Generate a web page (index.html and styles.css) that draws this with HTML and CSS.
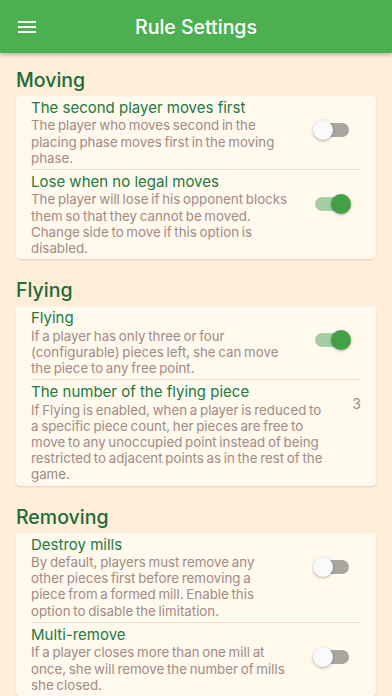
FILE: index.html
```html
<!DOCTYPE html>
<html lang="en">
<head>
  <meta charset="UTF-8">
  <meta name="viewport" content="width=device-width, initial-scale=1.0">
  <title>Rule Settings</title>
  <link rel="stylesheet" href="styles.css">
</head>
<body>
  <header class="app-bar">
    <button class="menu-btn" aria-label="Menu">
      <svg width="18" height="14" viewBox="0 0 18 14">
        <rect x="0" y="1" width="18" height="2" fill="#fff"/>
        <rect x="0" y="6" width="18" height="2" fill="#fff"/>
        <rect x="0" y="11" width="18" height="2" fill="#fff"/>
      </svg>
    </button>
    <h1>Rule Settings</h1>
  </header>

  <main class="settings">
    <section class="group">
      <h2>Moving</h2>
      <div class="card">
        <div class="tile">
          <div class="tile-text">
            <div class="tile-title">The second player moves first</div>
            <div class="tile-sub">The player who moves second in the placing phase moves first in the moving phase.</div>
          </div>
          <div class="trailing"><span class="switch"></span></div>
        </div>
        <div class="tile">
          <div class="tile-text">
            <div class="tile-title">Lose when no legal moves</div>
            <div class="tile-sub">The player will lose if his opponent blocks them so that they cannot be moved. Change side to move if this option is disabled.</div>
          </div>
          <div class="trailing"><span class="switch on"></span></div>
        </div>
      </div>
    </section>

    <section class="group">
      <h2>Flying</h2>
      <div class="card">
        <div class="tile">
          <div class="tile-text">
            <div class="tile-title">Flying</div>
            <div class="tile-sub">If a player has only three or four (configurable) pieces left, she can move the piece to any free point.</div>
          </div>
          <div class="trailing"><span class="switch on"></span></div>
        </div>
        <div class="tile">
          <div class="tile-text">
            <div class="tile-title">The number of the flying piece</div>
            <div class="tile-sub">If Flying is enabled, when a player is reduced to a specific piece count, her pieces are free to move to any unoccupied point instead of being restricted to adjacent points as in the rest of the game.</div>
          </div>
          <div class="value">3</div>
        </div>
      </div>
    </section>

    <section class="group">
      <h2>Removing</h2>
      <div class="card">
        <div class="tile">
          <div class="tile-text">
            <div class="tile-title">Destroy mills</div>
            <div class="tile-sub">By default, players must remove any other pieces first before removing a piece from a formed mill. Enable this option to disable the limitation.</div>
          </div>
          <div class="trailing"><span class="switch"></span></div>
        </div>
        <div class="tile">
          <div class="tile-text">
            <div class="tile-title">Multi-remove</div>
            <div class="tile-sub">If a player closes more than one mill at once, she will remove the number of mills she closed.</div>
          </div>
          <div class="trailing"><span class="switch"></span></div>
        </div>
      </div>
    </section>
  </main>
</body>
</html>
```

FILE: styles.css
```css
body {
  margin: 0;
  font-family: Inter, "Noto Sans", sans-serif;
  background: #ffeed8;
  height: 696px;
  overflow: hidden;
}
.app-bar {
  position: relative;
  z-index: 1;
  height: 53px;
  background: #4caf50;
  display: flex;
  align-items: center;
  justify-content: center;
  box-shadow: 0 2px 4px rgba(0, 0, 0, 0.25);
}
.app-bar h1 {
  margin: 0;
  font-size: 19.5px;
  font-weight: 500;
  color: #fff;
}
.menu-btn {
  position: absolute;
  left: 18px;
  top: 20px;
  padding: 0;
  border: none;
  background: none;
  line-height: 0;
}
.settings {
  padding: 15px 16px 0;
}
.group {
  margin-bottom: 19px;
}
.group h2 {
  margin: 0 0 4px;
  font-size: 19.5px;
  line-height: 24px;
  font-weight: 500;
  color: #1d6b3a;
}
.card {
  background: #fff9ee;
  border-radius: 4px;
  box-shadow: 0 1px 2px rgba(120, 90, 60, 0.18);
  padding: 0 15px;
}
.tile {
  display: flex;
  align-items: flex-start;
  gap: 16px;
  padding: 3px 0;
}
.tile + .tile {
  border-top: 1px solid #ecdcd2;
}
.tile-text {
  flex: 1;
}
.tile-title {
  font-size: 15px;
  line-height: 18.4px;
  color: #227a3e;
}
.tile-sub {
  font-size: 13.3px;
  line-height: 16.2px;
  word-spacing: -1px;
  color: #a38a84;
}
.trailing {
  width: 57.65px;
  height: 20px;
  margin-top: 21px;
  display: flex;
  align-items: center;
  justify-content: center;
}
.value {
  width: 19px;
  margin-top: 13px;
  text-align: right;
  font-size: 14px;
  line-height: 16px;
  color: #a38a84;
}
.switch {
  position: relative;
  width: 34px;
  height: 14px;
  border-radius: 7px;
  background: #aaa5a0;
}
.switch::after {
  content: "";
  position: absolute;
  top: -3px;
  left: -2px;
  width: 20px;
  height: 20px;
  border-radius: 50%;
  background: #fafafa;
  box-shadow: 0 1px 3px rgba(0, 0, 0, 0.3);
}
.switch.on {
  background: #a3cfa2;
}
.switch.on::after {
  left: 16px;
  background: #43a047;
}
```
